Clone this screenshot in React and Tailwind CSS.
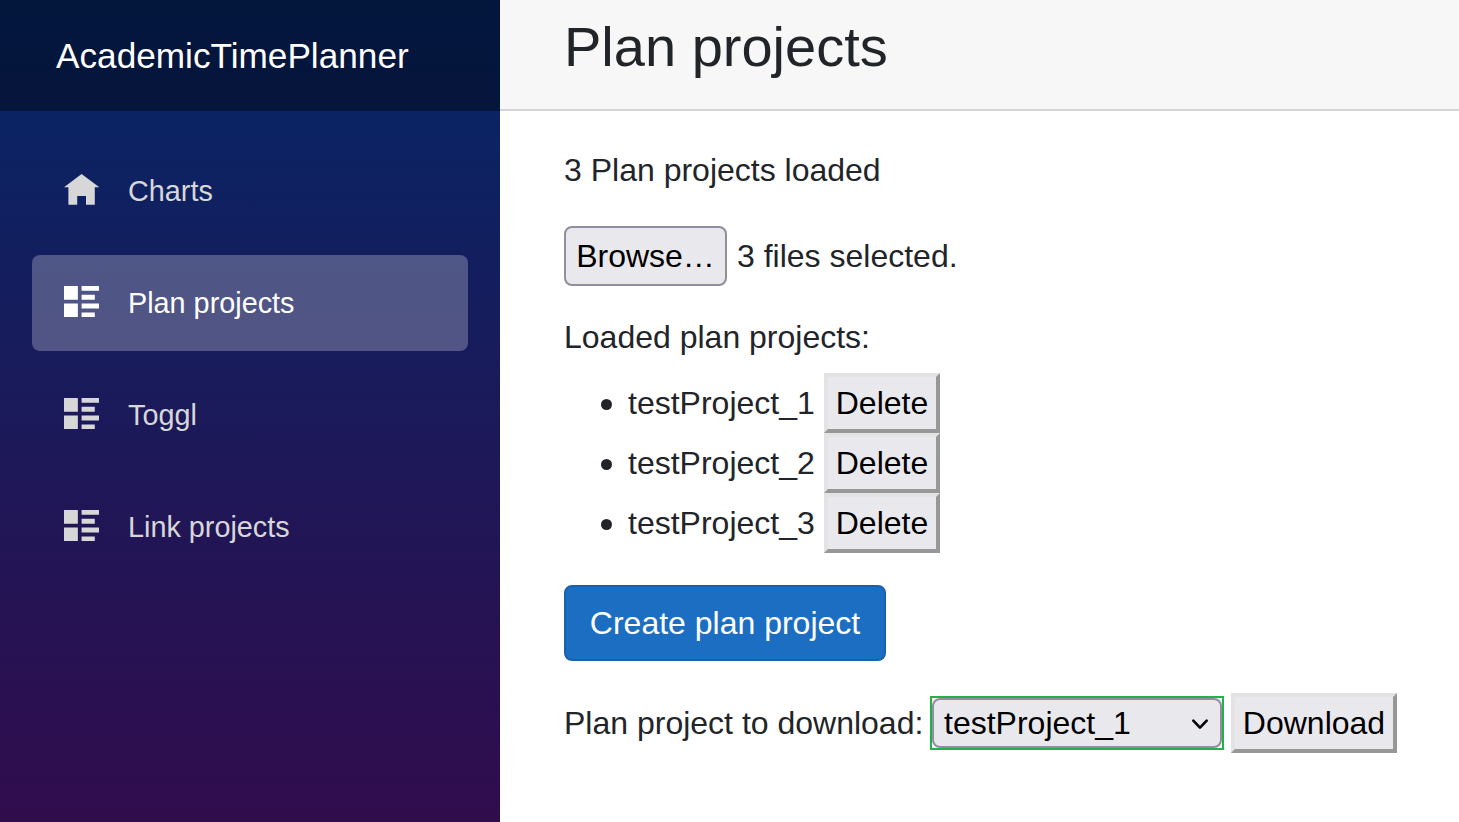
const HOME = "M4 0l-4 3h1v4h2v-2h2v2h2v-4h1l-4-3z";
const LIST =
  "M0 0v3.15h3.15v-3.15h-3.15zm4 0v1.1h4v-1.1h-4zm0 2v1.1h3v-1.1h-3zm-4 2v3.05h3.15v-3.05h-3.15zm4 0v1.1h4v-1.1h-4zm0 2v1.05h3v-1.05h-3z";

const NAV = [
  { label: "Charts", icon: HOME },
  { label: "Plan projects", icon: LIST, active: true },
  { label: "Toggl", icon: LIST },
  { label: "Link projects", icon: LIST },
];

const PROJECTS = ["testProject_1", "testProject_2", "testProject_3"];

function NavItem({ label, icon, active }) {
  return (
    <a
      className={
        "flex h-24 items-center rounded-lg pl-8 text-[28.8px] leading-[96px] " +
        (active ? "bg-white/25 text-white" : "text-[#d7d7d7]")
      }
    >
      <svg viewBox="0 0 8 8" className="mt-[2px] mr-[28.8px] h-[35.2px] w-[35.2px] shrink-0" fill="currentColor">
        <path d={icon} />
      </svg>
      {label}
    </a>
  );
}

function OutsetButton({ children, className }) {
  return (
    <button
      className={
        "h-[60px] shrink-0 border-4 border-t-[#e3e3e3] border-r-[#979797] border-b-[#979797] border-l-[#e3e3e3] bg-[#e9e9ed] text-center leading-[48px] text-black " +
        className
      }
    >
      {children}
    </button>
  );
}

export default function App() {
  return (
    <div className="flex h-[822px] w-[1459px] overflow-hidden bg-white font-['Liberation_Sans',Arial,sans-serif] text-[32px] leading-[48px] whitespace-nowrap text-[#212529]">
      <aside className="h-full w-[500px] shrink-0 bg-[linear-gradient(180deg,rgb(5,39,103)_0px,#3a0647_1000px)]">
        <div className="flex h-[111px] items-center bg-black/40 pl-14 text-[35.2px] text-white">
          AcademicTimePlanner
        </div>
        <nav className="flex flex-col gap-4 px-8 pt-8">
          {NAV.map((item) => (
            <NavItem key={item.label} {...item} />
          ))}
        </nav>
      </aside>

      <main className="min-w-0 grow">
        <header className="h-[111px] border-b-2 border-[#d6d5d5] bg-[#f7f7f7] pt-[13px] pl-16">
          <h1 className="text-[56px] leading-[67px]">Plan projects</h1>
        </header>

        <div className="pt-[35px] pl-16">
          <p>3 Plan projects loaded</p>

          <div className="mt-8 flex items-center">
            <button className="h-[60px] w-[163px] rounded-lg border-2 border-[#8f8f9d] bg-[#e9e9ed] text-center text-black">
              Browse…
            </button>
            <span className="ml-[10px]">3 files selected.</span>
          </div>

          <p className="mt-[27px]">Loaded plan projects:</p>

          <ul className="mt-3">
            {PROJECTS.map((name) => (
              <li key={name} className="flex h-[60px] items-center">
                <span className="mt-[3px] ml-[36.5px] h-[11px] w-[11px] rounded-full bg-[#212529]" />
                <span className="ml-[16.5px] w-[196px]">{name}</span>
                <OutsetButton className="w-[116px]">Delete</OutsetButton>
              </li>
            ))}
          </ul>

          <button className="mt-8 block h-[76px] w-[322px] rounded-lg border-2 border-[#1861ac] bg-[#1b6ec2] text-center text-white">
            Create plan project
          </button>

          <div className="mt-8 flex h-[60px] items-center">
            <span className="w-[366px]">Plan project to download:</span>
            <div className="flex h-[54px] w-[294px] border-2 border-[#22b14c]">
              <button className="flex grow items-center justify-between rounded-lg border-2 border-[#8f8f9d] bg-[#e9e9ed] pr-[11px] pl-[10px] text-black">
                <span>testProject_1</span>
                <svg viewBox="0 0 18 12" className="mt-[2px] h-3 w-[18px]" fill="none" stroke="currentColor" strokeWidth="2.6" strokeLinecap="round" strokeLinejoin="round">
                  <path d="M2.3 2.6l6.7 7 6.7-7" />
                </svg>
              </button>
            </div>
            <OutsetButton className="ml-[7px] w-[166px]">Download</OutsetButton>
          </div>
        </div>
      </main>
    </div>
  );
}
